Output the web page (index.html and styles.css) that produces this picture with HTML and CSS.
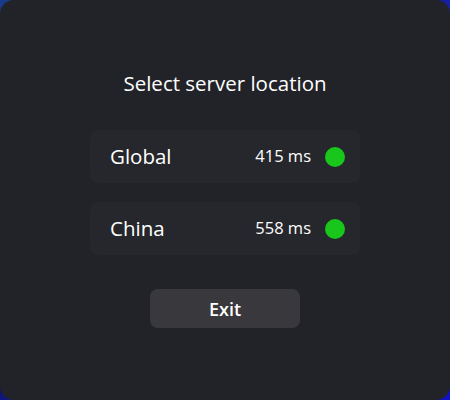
FILE: index.html
```html
<!DOCTYPE html>
<html lang="en">
  <head>
    <meta charset="UTF-8" />
    <title>Select server location</title>
    <link rel="stylesheet" href="styles.css">
  </head>
  <body>
    <div class="window">
      <div class="title">Select server location</div>

      <div class="server-list">
        <div class="server-item">
          <div class="server-name">Global</div>
          <div class="server-ping">415 ms</div>
          <span class="status-dot"></span>
        </div>
        <div class="server-item">
          <div class="server-name">China</div>
          <div class="server-ping">558 ms</div>
          <span class="status-dot"></span>
        </div>
      </div>

      <button class="exit-btn">Exit</button>
    </div>
  </body>
</html>
```

FILE: styles.css
```css
* {
  margin: 0;
  padding: 0;
  box-sizing: border-box;
}

body {
  width: 450px;
  height: 400px;
  font-family: "Open Sans", "Noto Sans", sans-serif;
  background: linear-gradient(135deg, #1a3a8a 0%, #0a0a50 40%, #1a2ad0 60%, #1010c8 100%);
  overflow: hidden;
}

.window {
  width: 450px;
  height: 400px;
  background-color: #222328;
  border-radius: 14px;
  display: flex;
  flex-direction: column;
  align-items: center;
  color: #fff;
}

.title {
  margin-top: 68px;
  font-size: 20.5px;
  line-height: 30px;
}

.server-list {
  margin-top: 32px;
  display: flex;
  flex-direction: column;
  gap: 19px;
}

.server-item {
  width: 270px;
  height: 53px;
  background-color: #26272c;
  border-radius: 8px;
  display: flex;
  align-items: center;
  padding: 0 15px 0 20px;
}

.server-name {
  flex: 1;
  font-size: 20.5px;
  padding-bottom: 2px;
}

.server-ping {
  font-size: 16.5px;
  margin-right: 14px;
  padding-bottom: 2px;
}

.status-dot {
  width: 20px;
  height: 20px;
  border-radius: 50%;
  background-color: #19c61c;
}

.exit-btn {
  margin-top: 34px;
  width: 150px;
  height: 39px;
  border: none;
  border-radius: 8px;
  background-color: #39393d;
  color: #fff;
  font-family: inherit;
  font-size: 18px;
  font-weight: 600;
  cursor: pointer;
}
```
